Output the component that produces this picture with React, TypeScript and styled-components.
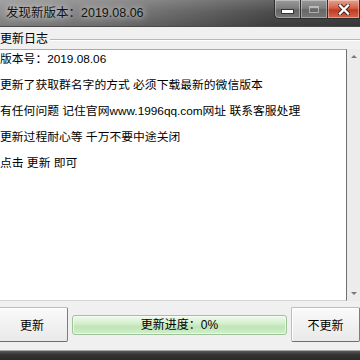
import React from "react";
import styled, { createGlobalStyle } from "styled-components";

const GlobalStyle = createGlobalStyle`
  html, body { margin: 0; padding: 0; background: #f0f0f0; }
  body { font-family: "Liberation Sans", "Noto Sans CJK SC", sans-serif; }
  #root { width: 360px; height: 360px; overflow: hidden; }
`;

const Window = styled.div`
  width: 360px;
  height: 360px;
  display: flex;
  flex-direction: column;
  background: #f0f0f0;
  overflow: hidden;
`;

const TitleBar = styled.div`
  height: 26px;
  flex: none;
  display: flex;
  align-items: flex-start;
  justify-content: space-between;
  border-bottom: 1px solid #4a4a4a;
  background:
    linear-gradient(180deg, rgba(255,255,255,0.18) 0%, rgba(255,255,255,0.04) 45%, rgba(0,0,0,0.12) 100%),
    linear-gradient(90deg, #8d8d8d 0%, #7a7a7a 30%, #5e5e5e 55%, #464646 75%, #3d3d3d 100%);
`;

const Title = styled.div`
  margin: 6px 0 0 6px;
  font-size: 12.5px;
  line-height: 15px;
  color: #141414;
  white-space: nowrap;
  text-shadow: 0 0 6px rgba(230, 230, 230, 0.9), 0 0 10px rgba(220, 220, 220, 0.6);
`;

const Caption = styled.div`
  display: flex;
  margin-left: auto;
  padding-left: 4px;
`;

const CapBtn = styled.div<{ $w: number }>`
  width: ${(p) => p.$w}px;
  height: 19px;
  box-sizing: border-box;
  display: flex;
  align-items: center;
  justify-content: center;
  border: 1px solid #2e2e2e;
  border-top: none;
  box-shadow: inset 0 0 0 1px rgba(255,255,255,0.35);
  background: linear-gradient(180deg, #9a9a9a 0%, #7e7e7e 45%, #666 55%, #777 100%);
  &:first-child { border-bottom-left-radius: 5px; }
  & + & { border-left: none; }
`;

const CloseBtn = styled(CapBtn)`
  background: linear-gradient(180deg, #e8a18e 0%, #d2614a 45%, #c23a22 55%, #d5684f 100%);
`;

const MinGlyph = styled.div`
  width: 11px;
  height: 3px;
  background: #fff;
  border: 1px solid #333;
  margin-top: 4px;
`;

const MaxGlyph = styled.div`
  width: 10px;
  height: 7px;
  border: 1px solid rgba(255,255,255,0.45);
  border-top-width: 2px;
  box-sizing: border-box;
`;

const Client = styled.div`
  flex: 1;
  display: flex;
  flex-direction: column;
  padding-top: 4px;
  min-height: 0;
`;

const GroupHeader = styled.div`
  height: 16px;
  display: flex;
  align-items: center;
  gap: 2px;
  margin-bottom: 2px;
`;

const GroupLabel = styled.span`
  font-size: 12px;
  line-height: 14px;
  color: #000;
  white-space: nowrap;
`;

const GroupRule = styled.div`
  flex: 1;
  height: 0;
  border-top: 1px solid #b8b8b8;
  border-bottom: 1px solid #ffffff;
  margin-top: 2px;
`;

const EditorRow = styled.div`
  height: 252px;
  display: flex;
`;

const Editor = styled.div`
  width: 347px;
  box-sizing: border-box;
  background: #fff;
  border-top: 1px solid #a9a9a9;
  border-right: 1px solid #707070;
  border-bottom: 1px solid #d6d6d6;
  padding: 2px 0 0 0;
  display: flex;
  flex-direction: column;
  gap: 12px;
`;

const Line = styled.div`
  font-size: 11.8px;
  line-height: 14px;
  color: #000;
  white-space: nowrap;
`;

const ScrollBar = styled.div`
  flex: 1;
  display: flex;
  flex-direction: column;
  justify-content: space-between;
  align-items: center;
  background: #ececec;
  padding: 6px 0 6px 0;
`;

const Arrow = styled.div<{ $down?: boolean }>`
  width: 0;
  height: 0;
  border-left: 3px solid transparent;
  border-right: 3px solid transparent;
  ${(p) =>
    p.$down
      ? "border-top: 3px solid #7a7a7a;"
      : "border-bottom: 3px solid #7a7a7a;"}
`;

const ActionRow = styled.div`
  margin-top: 6px;
  margin-left: -4px;
  height: 35px;
  display: grid;
  grid-template-columns: 72px 215px 1fr;
  column-gap: 4px;
  align-items: center;
`;

const PushButton = styled.div`
  height: 35px;
  box-sizing: border-box;
  display: flex;
  align-items: center;
  justify-content: center;
  font-size: 12px;
  color: #000;
  border: 1px solid #bdbdbd;
  border-right-color: #7c7c7c;
  border-bottom-color: #6e6e6e;
  border-radius: 2px;
  background: linear-gradient(180deg, #fafafa 0%, #f1f1f1 50%, #e9e9e9 100%);
  box-shadow: inset 1px 1px 0 #ffffff;
`;

const Progress = styled.div`
  height: 20px;
  box-sizing: border-box;
  border: 1px solid #9cc49a;
  border-radius: 3px;
  display: flex;
  align-items: center;
  justify-content: center;
  background: linear-gradient(180deg, #eef9eb 0%, #d6f0cf 40%, #bfe5b6 60%, #d3eecb 100%);
  box-shadow: inset 0 0 0 1px rgba(255,255,255,0.6);
`;

const ProgressLabel = styled.span`
  font-size: 12px;
  line-height: 14px;
  color: #000;
`;

const BottomFrame = styled.div`
  height: 9px;
  flex: none;
  margin-top: auto;
  border-top: 1px solid #a6a6a6;
  background: linear-gradient(180deg, #5a5a5a 0%, #333 40%, #2a2a2a 100%);
`;

const lines = [
  "版本号：2019.08.06",
  "更新了获取群名字的方式 必须下载最新的微信版本",
  "有任何问题 记住官网www.1996qq.com网址 联系客服处理",
  "更新过程耐心等 千万不要中途关闭",
  "点击 更新 即可",
];

export default function App() {
  return (
    <>
      <GlobalStyle />
      <Window>
        <TitleBar>
          <Title>发现新版本：2019.08.06</Title>
          <Caption>
            <CapBtn $w={27}>
              <MinGlyph />
            </CapBtn>
            <CapBtn $w={27}>
              <MaxGlyph />
            </CapBtn>
            <CloseBtn $w={32}>
              <svg width="12" height="11" viewBox="0 0 12 11">
                <path d="M2 1.5 L10 9.5 M10 1.5 L2 9.5" stroke="#3a1a12" strokeWidth="4" strokeLinecap="square" />
                <path d="M2 1.5 L10 9.5 M10 1.5 L2 9.5" stroke="#ffffff" strokeWidth="2.4" strokeLinecap="square" />
              </svg>
            </CloseBtn>
          </Caption>
        </TitleBar>
        <Client>
          <GroupHeader>
            <GroupLabel>更新日志</GroupLabel>
            <GroupRule />
          </GroupHeader>
          <EditorRow>
            <Editor>
              {lines.map((l) => (
                <Line key={l}>{l}</Line>
              ))}
            </Editor>
            <ScrollBar>
              <Arrow />
              <Arrow $down />
            </ScrollBar>
          </EditorRow>
          <ActionRow>
            <PushButton>更新</PushButton>
            <Progress>
              <ProgressLabel>更新进度：0%</ProgressLabel>
            </Progress>
            <PushButton>不更新</PushButton>
          </ActionRow>
          <BottomFrame />
        </Client>
      </Window>
    </>
  );
}
